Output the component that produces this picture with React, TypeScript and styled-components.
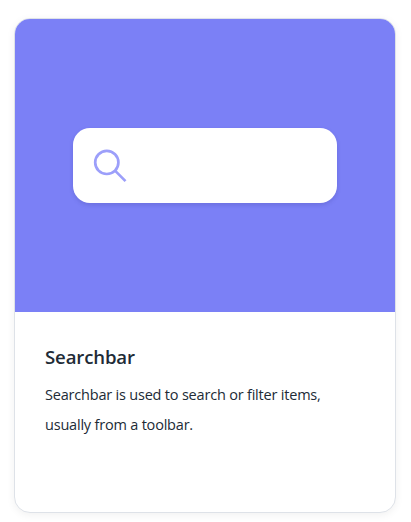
import React from "react";
import styled, { createGlobalStyle } from "styled-components";

const GlobalStyle = createGlobalStyle`
  *, *::before, *::after { box-sizing: border-box; }
  body {
    margin: 0;
    background: #fff;
    font-family: "Segoe UI", "Open Sans", "Noto Sans", sans-serif;
  }
`;

const Page = styled.main`
  padding: 18px 15px 9px 14px;
  height: 522px;
`;

const Card = styled.article`
  display: flex;
  flex-direction: column;
  height: 495px;
  border: 1px solid #dee2e8;
  border-radius: 16px;
  background: #fff;
  box-shadow: 0 2px 8px rgba(0, 0, 0, 0.06);
  overflow: hidden;
`;

const Preview = styled.div`
  display: flex;
  justify-content: center;
  flex: 0 0 293px;
  padding-top: 109px;
  background: #7b80f6;
`;

const SearchField = styled.div`
  width: 264px;
  height: 75px;
  padding: 20px 0 0 19px;
  border-radius: 17px;
  background: #fff;
  box-shadow: 0 2px 4px rgba(40, 40, 120, 0.18);
`;

const SearchIcon = styled.svg`
  display: block;
  width: 36px;
  height: 36px;
`;

const Content = styled.div`
  padding: 30px;
`;

const Title = styled.h2`
  margin: 0;
  color: #212b36;
  font-size: 18.6px;
  font-weight: 600;
  line-height: 30px;
  white-space: nowrap;
  letter-spacing: -0.15px;
`;

const Description = styled.p`
  margin: 8px 0 0;
  color: #212b36;
  font-size: 14.5px;
  line-height: 30px;
  white-space: nowrap;
  letter-spacing: -0.2px;
`;

export default function App() {
  return (
    <>
      <GlobalStyle />
      <Page>
        <Card>
          <Preview>
            <SearchField>
              <SearchIcon viewBox="0 0 36 36" fill="none" stroke="#9c9ffa" strokeWidth="2.7" aria-hidden="true">
                <circle cx="14.8" cy="14.4" r="11.6" />
                <path d="M23 22.6L33.5 33.1" />
              </SearchIcon>
            </SearchField>
          </Preview>
          <Content>
            <Title>Searchbar</Title>
            <Description>
              Searchbar is used to search or filter items,
              <br />
              usually from a toolbar.
            </Description>
          </Content>
        </Card>
      </Page>
    </>
  );
}
